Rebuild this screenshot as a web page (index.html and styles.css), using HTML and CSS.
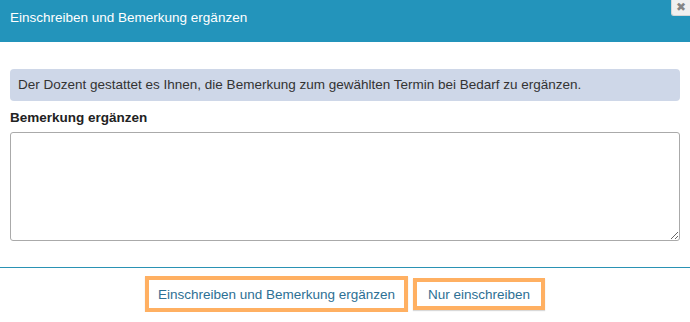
FILE: index.html
```html
<!DOCTYPE html>
<html lang="de">
<head>
    <meta charset="UTF-8">
    <title>Einschreiben und Bemerkung ergänzen</title>
    <link rel="stylesheet" href="styles.css">
</head>
<body>
    <div class="dialog">
        <div class="dialog-header">
            <span class="dialog-title">Einschreiben und Bemerkung ergänzen</span>
            <button class="dialog-close" title="Schließen">&#x2716;</button>
        </div>

        <div class="dialog-body">
            <div class="info">Der Dozent gestattet es Ihnen, die Bemerkung zum gewählten Termin bei Bedarf zu ergänzen.</div>
            <label class="field-label" for="bemerkung">Bemerkung ergänzen</label>
            <textarea id="bemerkung" class="field-text"></textarea>
        </div>

        <div class="dialog-footer">
            <button class="btn btn-main">Einschreiben und Bemerkung ergänzen</button>
            <button class="btn">Nur einschreiben</button>
        </div>
    </div>
</body>
</html>
```

FILE: styles.css
```css
body {
    margin: 0;
    font-family: "Liberation Sans", Arial, sans-serif;
    font-size: 13.5px;
    color: #333;
    background: #fff;
}
.dialog {
    position: relative;
    width: 690px;
}
.dialog-header {
    position: relative;
    height: 42px;
    box-sizing: border-box;
    padding: 10px 10px 0;
    background: #2394bb;
    color: #fff;
    line-height: 16px;
}
.dialog-close {
    position: absolute;
    top: 0;
    right: 0;
    width: 19px;
    height: 16px;
    padding: 0;
    border: 1px solid #d6d6d6;
    border-top: 0;
    border-right: 0;
    border-radius: 0 0 0 3px;
    background: #f0f0f0;
    color: #858585;
    font-size: 12px;
    font-weight: bold;
    line-height: 15px;
    text-align: center;
    font-family: "DejaVu Sans", sans-serif;
}
.dialog-body {
    padding: 27px 10px 0;
}
.info {
    padding: 6px 8px;
    background: #ced7e8;
    border-radius: 4px;
    line-height: 20px;
    color: #333;
}
.field-label {
    display: block;
    margin-top: 7px;
    font-weight: bold;
    line-height: 20px;
    color: #222;
}
.field-text {
    display: block;
    box-sizing: border-box;
    width: 100%;
    height: 109px;
    margin-top: 4px;
    border: 1px solid #aaa;
    border-radius: 3px;
    font-family: inherit;
    font-size: 13.5px;
}
.dialog-footer {
    margin-top: 26px;
    border-top: 1px solid #2a92b4;
    padding-top: 8px;
    display: flex;
    justify-content: center;
    align-items: center;
    gap: 5px;
}
.btn {
    height: 32px;
    padding: 0 11px;
    border: 4px solid #ffb062;
    background: #fff;
    color: #2d7094;
    font-family: inherit;
    font-size: 13.5px;
    box-shadow: 0 1px 1px rgba(0,0,0,0.15);
}
.btn-main {
    height: 36px;
    padding: 0 9px;
}
```
